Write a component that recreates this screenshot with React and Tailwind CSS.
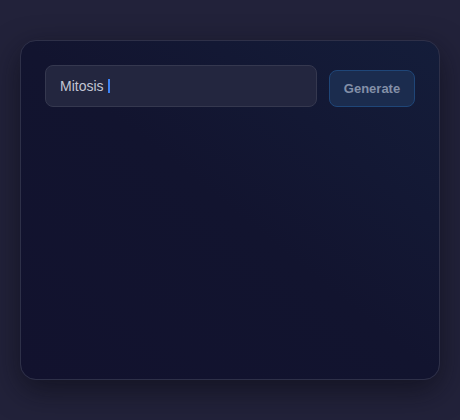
export default function App() {
  return (
    <div className="min-h-[420px] w-full bg-[#22223a] pt-10 px-5 font-['Liberation_Sans',Arial,sans-serif]">
      <div className="h-[340px] rounded-2xl border border-[#2e3048] bg-gradient-to-bl from-[#141d3a] via-[#12142f] to-[#12122e] p-6 shadow-[0_10px_30px_rgba(10,10,20,0.6)]">
        <div className="flex items-end gap-3">
          <div className="flex h-[42px] flex-1 items-center rounded-lg border border-[#35384f] bg-[#23263f] px-[14px]">
            <span className="text-[14px] text-[#c2c5d3]">Mitosis</span>
            <span className="ml-[4px] h-[14px] w-[2px] bg-[#3b82f6]"></span>
          </div>
          <button className="h-[37px] w-[86px] rounded-lg border border-[#1f4678] bg-[#1b2c4e] text-[13px] font-bold text-[#8390a8]">
            Generate
          </button>
        </div>
      </div>
    </div>
  );
}
